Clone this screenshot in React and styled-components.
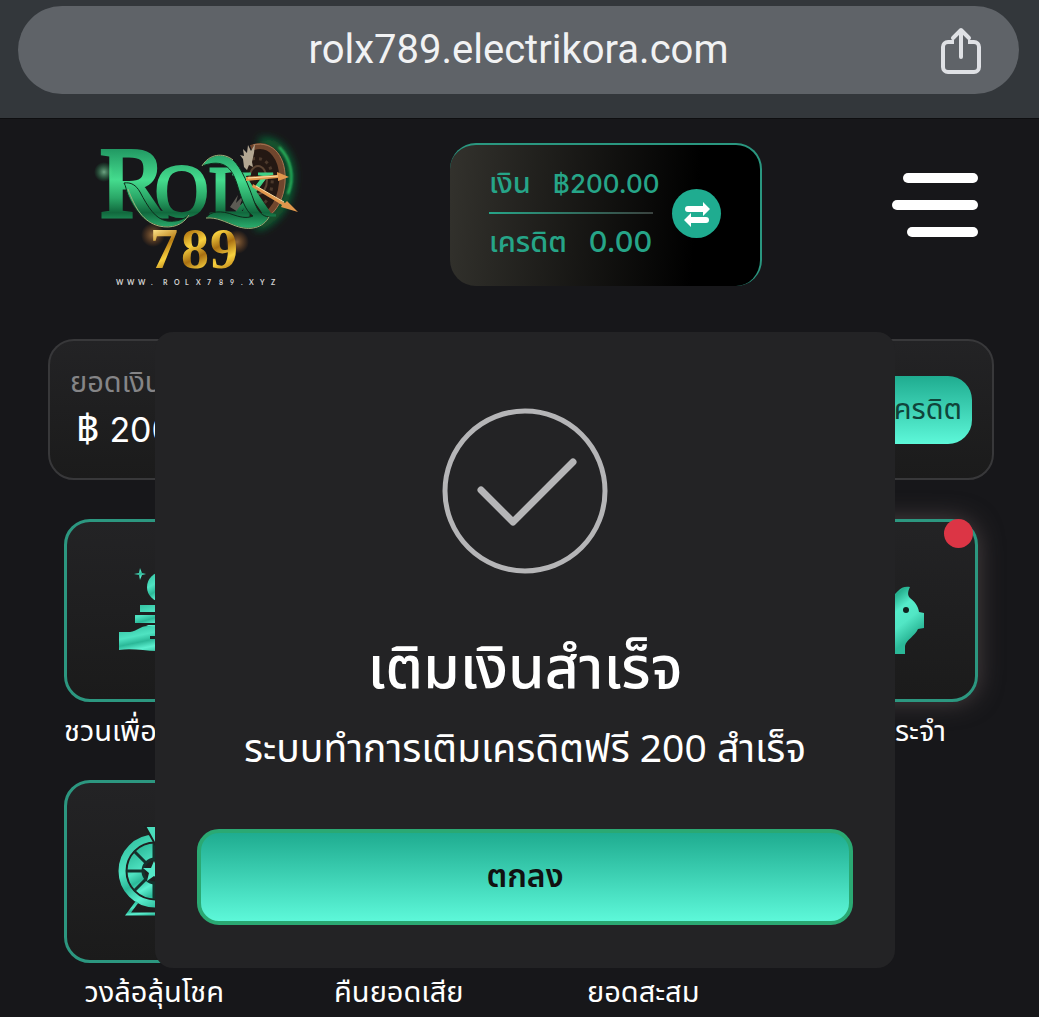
import React from "react";
import styled, { createGlobalStyle } from "styled-components";

const GlobalStyle = createGlobalStyle`
  * {
    box-sizing: border-box;
  }
  body {
    margin: 0;
    background: #17171a;
    color: #fff;
    font-family: "Noto Sans Thai", "Noto Sans", sans-serif;
  }
  button {
    font-family: inherit;
    border: none;
    padding: 0;
    cursor: pointer;
  }
`;

const Page = styled.div`
  position: relative;
  height: 100vh;
  overflow: hidden;
`;

const BrowserBar = styled.div`
  height: 119px;
  padding: 6px 20px 24px 18px;
  background: #33373b;
  border-bottom: 1px solid #0e0e10;
`;

const Address = styled.div`
  display: grid;
  grid-template-columns: 80px 1fr 80px;
  align-items: center;
  height: 88px;
  padding-right: 18px;
  padding-left: 18px;
  border-radius: 44px;
  background: #5f6368;
`;

const Url = styled.span`
  grid-column: 2;
  text-align: center;
  font-family: Roboto, sans-serif;
  font-size: 40px;
  line-height: 48px;
  color: #f1f2f3;
`;

const ShareButton = styled.button`
  display: flex;
  justify-content: center;
  background: none;
`;

const Header = styled.header`
  display: flex;
  align-items: flex-start;
  justify-content: space-between;
  padding: 6px 61px 0 80px;
  height: 220px;
`;

const Wallet = styled.div`
  display: flex;
  align-items: center;
  justify-content: space-between;
  width: 312px;
  height: 143px;
  margin-top: 18px;
  padding: 0 39px 4px 39px;
  border-top: 2px solid #2a9780;
  border-right: 2px solid #2a9780;
  border-radius: 26px;
  background: linear-gradient(95deg, #33322d, #000 78%) border-box;
  border-bottom: 0 solid transparent;
`;

const WalletRows = styled.div`
  width: 174px;
  color: #26a588;
`;

const WalletRow = styled.div`
  display: flex;
  align-items: baseline;
  gap: 22px;
  font-size: 29px;
  font-weight: 500;
  line-height: 56px;
  white-space: nowrap;
`;

const Amount = styled.span`
  font-family: Inter, "Noto Sans Thai", sans-serif;
  font-size: ${(props) => props.$size};
`;

const Divider = styled.div`
  width: 164px;
  height: 2px;
  background: linear-gradient(90deg, #26a588, #3a423f);
`;

const SwapButton = styled.button`
  display: flex;
  flex: none;
  align-items: center;
  justify-content: center;
  width: 49px;
  height: 49px;
  border-radius: 50%;
  background: #1fac90;
`;

const MenuButton = styled.button`
  display: flex;
  flex-direction: column;
  align-items: flex-end;
  gap: 17px;
  width: 86px;
  margin-top: 48px;
  background: none;
`;

const MenuLine = styled.span`
  width: ${(props) => props.width};
  height: 10px;
  border-radius: 5px;
  background: #fff;
`;

const Balance = styled.section`
  display: flex;
  align-items: center;
  justify-content: space-between;
  height: 141px;
  margin: 0 45px 0 48px;
  padding: 0 20px;
  border: 2px solid #38383a;
  border-radius: 26px;
  background: linear-gradient(#232325, #1b1b1b);
`;

const BalanceLabel = styled.div`
  font-size: 29px;
  line-height: 40px;
  color: #858587;
`;

const BalanceAmount = styled.div`
  display: flex;
  align-items: baseline;
  gap: 10px;
  padding-left: 6px;
  font-size: 40px;
  line-height: 54px;
`;

const CreditButton = styled.button`
  width: 160px;
  height: 68px;
  padding-right: 10px;
  border-radius: 24px;
  background: linear-gradient(#1fac90, #5df8d9);
  color: #10443a;
  font-size: 29px;
  text-align: right;
`;

const Menu = styled.nav`
  display: grid;
  grid-template-columns: repeat(4, 1fr);
  column-gap: 64px;
  row-gap: 18px;
  padding: 39px 61px 0 64px;
`;

const MenuItem = styled.a`
  grid-column: ${(props) => props.$column};
  min-width: 0;
  color: #fff;
  text-decoration: none;
  text-align: center;
`;

const Tile = styled.div`
  position: relative;
  display: flex;
  align-items: center;
  justify-content: center;
  height: 183px;
  border: 3px solid #2c9780;
  border-radius: 26px;
  background: linear-gradient(#232325, #1b1b1b);
  box-shadow: ${(props) => (props.$active ? "0 0 24px #4a4142" : "none")};
`;

const Dot = styled.span`
  position: absolute;
  top: -3px;
  right: 2px;
  width: 29px;
  height: 29px;
  border-radius: 50%;
  background: #dc3545;
`;

const ItemName = styled.div`
  font-size: 29px;
  line-height: 60px;
  white-space: nowrap;
`;

const Overlay = styled.div`
  position: absolute;
  inset: 332px 0 0;
  padding: 0 144px 0 155px;
`;

const Modal = styled.div`
  display: flex;
  flex-direction: column;
  align-items: center;
  padding: 76px 42px 43px;
  border-radius: 18px;
  background: #232325;
`;

const ModalTitle = styled.h2`
  margin: 56px 0 0;
  font-size: 59px;
  font-weight: 500;
  line-height: 80px;
`;

const ModalText = styled.p`
  margin: 14px 0 0;
  font-size: 39px;
  line-height: 54px;
  white-space: nowrap;
`;

const ConfirmButton = styled.button`
  width: 100%;
  height: 96px;
  margin-top: 51px;
  border: 4px solid #2aa973;
  border-radius: 22px;
  background: linear-gradient(#1fac90, #5df8d9);
  color: #111;
  font-size: 32px;
  font-weight: 600;
`;

const ShareIcon = () => (
  <svg width="42" height="50" viewBox="0 0 42 50" fill="none" stroke="#dfe1e5" strokeWidth="4" strokeLinecap="round" strokeLinejoin="round">
    <path d="M14 17H8a5 5 0 0 0-5 5v20a5 5 0 0 0 5 5h26a5 5 0 0 0 5-5V22a5 5 0 0 0-5-5h-6" strokeLinecap="butt" />
    <path d="M21 32V6M13 13l8-8 8 8" />
  </svg>
);

const SwapIcon = () => (
  <svg width="28" height="26" viewBox="0 0 28 26" fill="none" stroke="#fff" strokeWidth="6" strokeLinecap="round">
    <path d="M5 8h16M8 19h15" />
    <path d="M20 1l7 7-7 7zM8 12l-7 7 7 7z" fill="#fff" stroke="none" />
  </svg>
);

const Logo = () => (
  <svg width="240" height="170" viewBox="0 0 240 170" role="img" aria-label="ROLX 789">
    <defs>
      <linearGradient id="green" x1="0" y1="22" x2="0" y2="104" gradientUnits="userSpaceOnUse">
        <stop offset="0" stopColor="#1f9460" />
        <stop offset=".4" stopColor="#45dc8e" />
        <stop offset=".62" stopColor="#2aa767" />
        <stop offset=".8" stopColor="#11683d" />
        <stop offset="1" stopColor="#2cb371" />
      </linearGradient>
      <linearGradient id="gold" x1="70" y1="106" x2="90" y2="146" gradientUnits="userSpaceOnUse" spreadMethod="reflect">
        <stop offset="0" stopColor="#ffe58c" />
        <stop offset=".4" stopColor="#b87d14" />
        <stop offset=".7" stopColor="#f8d13f" />
        <stop offset="1" stopColor="#a97012" />
      </linearGradient>
      <radialGradient id="spark">
        <stop offset="0" stopColor="#ffb35c" stopOpacity=".5" />
        <stop offset="1" stopColor="#ff8a2a" stopOpacity="0" />
      </radialGradient>
      <radialGradient id="greenSpark">
        <stop offset="0" stopColor="#aaffc8" stopOpacity=".6" />
        <stop offset="1" stopColor="#2ee07a" stopOpacity="0" />
      </radialGradient>
      <filter id="glow" x="-80%" y="-50%" width="260%" height="200%">
        <feGaussianBlur stdDeviation="4" />
      </filter>
      <filter id="softGlow" x="-80%" y="-50%" width="260%" height="200%">
        <feGaussianBlur stdDeviation="1" />
      </filter>
    </defs>

    {/* clock */}
    <path d="M180 17c20-2 32 16 30 40-2 22-16 40-34 45" fill="none" stroke="#0b7a3a" strokeWidth="7" filter="url(#glow)" />
    <path d="M199 22c12 12 16 30 9 47" fill="none" stroke="#2cc968" strokeWidth="2" filter="url(#softGlow)" />
    <path d="M173 23c18-6 29 11 28 35-1 20-13 36-30 37l-10-30z" fill="#241813" />
    <path d="M171 23c20-8 33 11 31 35-2 23-15 37-34 38" fill="none" stroke="#70462d" strokeWidth="6" />
    <path d="M173 20c21-5 34 13 32 38-2 22-14 37-32 40" fill="none" stroke="#a67551" strokeWidth="1" />
    <path d="M172 34c14-3 22 8 20 25-1 14-8 23-18 24" fill="none" stroke="#4b382b" strokeWidth="3" strokeDasharray="3 4" />
    <ellipse cx="178" cy="55" rx="9" ry="14" fill="none" stroke="#5b4433" strokeWidth="2" />
    <path d="M164 42l-1-8-3-4 4 1-1-7 4 4 1-8 3 6 4-7-1 9-2 9 1 5-4-2-2 5z" fill="#b3a793" />
    <path d="M150 82l8-12-2 8 8-8-4 10 5-2-7 9z" fill="#a3a08e" opacity=".5" />

    <g fill="url(#green)">
      <text fontFamily="Liberation Serif, serif" y="91" stroke="url(#green)" strokeWidth="3">
        <tspan x="20" fontSize="100" strokeWidth="4">R</tspan>
        <tspan x="75" fontSize="74">O</tspan>
        <tspan x="129" fontSize="72">L</tspan>
        <tspan x="149" fontSize="66" strokeWidth="1">X</tspan>
      </text>
      <g stroke="#0e2b1b" strokeWidth="1">
        <path d="M44 58c7-1 12 2 16 9 8 15 15 27 27 29 9 1 16-1 22-6-6 10-17 14-30 11-16-4-25-17-31-31-2-5-2-9-4-12z" />
        <path d="M122 41c7-12 21-14 31-6 9 8 16 27 21 41 4 11 8 15 15 16-6 11-19 14-33 9-11-4-19-9-30-8 4-7 15-8 28-3 9 3 14 3 19 1-8-5-12-19-16-32-5-16-13-26-35-18z" />
      </g>
      <g fill="none" stroke="#a3b27c" strokeWidth="1">
        <path d="M48 64c7 19 15 33 31 37 13 3 24-1 30-11" />
        <path d="M122 41c7-12 21-14 31-6M126 93c11-1 19 4 30 8 14 5 27 2 33-9" />
      </g>
    </g>
    <circle cx="24" cy="47" r="10" fill="url(#greenSpark)" />

    <path d="M166 52l31-2v-3l12 5-11 4v-3l-32 3zM173 59l32 19 2-2 11 11-17-5 1-2-30-18z" fill="#e0974d" />
    <path d="M168 53l30-2M176 61l28 16" stroke="#ffe0a6" strokeWidth="1" />

    <circle cx="73" cy="110" r="12" fill="url(#spark)" />
    <circle cx="157" cy="117" r="12" fill="url(#spark)" />
    <text x="70 101 130" y="143" fontFamily="Liberation Serif, serif" fontSize="56" fontWeight="700" fill="url(#gold)">
      789
    </text>
    <text
      x="36 47 58 71 83 94 105 116 127 139 150 161 169 180 191"
      y="160"
      fontFamily="Lato, sans-serif"
      fontSize="7"
      fontWeight="700"
      fill="#d0d0d0"
    >
      WWW.ROLX789.XYZ
    </text>
  </svg>
);

const IconGradient = ({ id }) => (
  <linearGradient id={id} x1="0" y1="0" x2=".6" y2="1">
    <stop offset="0" stopColor="#2fbd9d" />
    <stop offset=".4" stopColor="#4fe3c2" />
    <stop offset=".6" stopColor="#2bb898" />
    <stop offset=".8" stopColor="#5df0d0" />
    <stop offset="1" stopColor="#2fbd9d" />
  </linearGradient>
);

const CoinsIcon = () => (
  <svg width="72" height="86" viewBox="0 0 72 86">
    <defs>
      <IconGradient id="coins" />
    </defs>
    <g fill="url(#coins)">
      <path d="M22 0l2 5 4 1-4 1-2 5-1-5-5-1 5-1z" />
      <circle cx="44" cy="19" r="15" />
      <path d="M22 37h40v7H22zM17 47h42v8H17zM28 57h31v3H35z" />
      <path d="M1 64h11c7-1 10-6 18-6 9 0 13 4 23 5v5H32v3h14c12-2 18-8 26-6-7 11-18 18-33 18-13 0-24-3-38-1z" />
    </g>
  </svg>
);

const WheelIcon = () => (
  <svg width="74" height="92" viewBox="0 0 74 92">
    <defs>
      <IconGradient id="wheel" />
    </defs>
    <g fill="none" stroke="url(#wheel)">
      <circle cx="38" cy="45" r="33" strokeWidth="7" />
      <circle cx="38" cy="45" r="20" strokeWidth="15" />
      <path d="M20 76L11 88h52L54 76" strokeWidth="3" />
    </g>
    <g stroke="#15312c" strokeWidth="3">
      <path d="M9 45h17M17 25l12 12M17 65l12-12M37 17v17M37 73V56M65 45H48M57 25L45 37M57 65L45 53" />
      <circle cx="38" cy="45" r="12" fill="none" />
    </g>
    <path d="M37 35l3 7h8l-6 5 2 8-7-5-7 5 2-8-6-5h8z" fill="#55e8c8" />
    <path d="M28 0h20L38 18z" fill="#4adcbc" stroke="#1e1e1f" strokeWidth="2" />
  </svg>
);

const PiggyIcon = () => (
  <svg width="76" height="86" viewBox="0 -18 76 86">
    <defs>
      <linearGradient id="piggy" x1=".5" y1="0" x2="1" y2=".6">
        <stop offset="0" stopColor="#3fd3b2" />
        <stop offset=".2" stopColor="#26b08f" />
        <stop offset=".45" stopColor="#55ecca" />
        <stop offset=".7" stopColor="#52e6c5" />
        <stop offset="1" stopColor="#2bb898" />
      </linearGradient>
    </defs>
    <path
      d="M4 35c0-17 16-24 32-24 7 0 9-3 12-6 3-4 8-5 12-4-2 4-3 8 0 11 5 4 8 8 9 14l5 1v15l-6 1c-3 7-12 11-13 17v8H40v-8H25v8H12V54C7 48 4 42 4 35z"
      fill="url(#piggy)"
    />
    <circle cx="56" cy="24" r="3" fill="#10211d" />
  </svg>
);

const items = [
  { name: "ชวนเพื่อนรับเงิน", column: 1, icon: <CoinsIcon /> },
  { name: "ฝากประจำ", column: 4, icon: <PiggyIcon />, active: true },
  { name: "วงล้อลุ้นโชค", column: 1, icon: <WheelIcon /> },
  { name: "คืนยอดเสีย", column: 2 },
  { name: "ยอดสะสม", column: 3 },
];

const App = () => {
  return (
    <Page>
      <GlobalStyle />
      <BrowserBar>
        <Address>
          <Url>rolx789.electrikora.com</Url>
          <ShareButton aria-label="Share">
            <ShareIcon />
          </ShareButton>
        </Address>
      </BrowserBar>
      <Header>
        <Logo />
        <Wallet>
          <WalletRows>
            <WalletRow>
              <span>เงิน</span>
              <Amount $size="26px">฿200.00</Amount>
            </WalletRow>
            <Divider />
            <WalletRow>
              <span>เครดิต</span>
              <Amount $size="29px">0.00</Amount>
            </WalletRow>
          </WalletRows>
          <SwapButton aria-label="Swap">
            <SwapIcon />
          </SwapButton>
        </Wallet>
        <MenuButton aria-label="Menu">
          <MenuLine width="75px" />
          <MenuLine width="86px" />
          <MenuLine width="71px" />
        </MenuButton>
      </Header>
      <Balance>
        <div>
          <BalanceLabel>ยอดเงิน</BalanceLabel>
          <BalanceAmount>
            <span>฿</span>
            <Amount $size="34px">200.00</Amount>
          </BalanceAmount>
        </div>
        <CreditButton>เครดิต</CreditButton>
      </Balance>
      <Menu>
        {items.map((item) => (
          <MenuItem key={item.name} href="#" $column={item.column}>
            <Tile $active={item.active}>
              {item.icon}
              {item.active && <Dot />}
            </Tile>
            <ItemName>{item.name}</ItemName>
          </MenuItem>
        ))}
      </Menu>
      <Overlay>
        <Modal role="dialog" aria-labelledby="modal-title">
          <svg width="166" height="166" viewBox="0 0 166 166" fill="none" stroke="#b5b5b7">
            <circle cx="83" cy="83" r="80" strokeWidth="5" />
            <path d="M39 82l32 32 60-60" strokeWidth="7" strokeLinecap="round" strokeLinejoin="round" />
          </svg>
          <ModalTitle id="modal-title">เติมเงินสำเร็จ</ModalTitle>
          <ModalText>ระบบทำการเติมเครดิตฟรี 200 สำเร็จ</ModalText>
          <ConfirmButton>ตกลง</ConfirmButton>
        </Modal>
      </Overlay>
    </Page>
  );
};

export default App;
